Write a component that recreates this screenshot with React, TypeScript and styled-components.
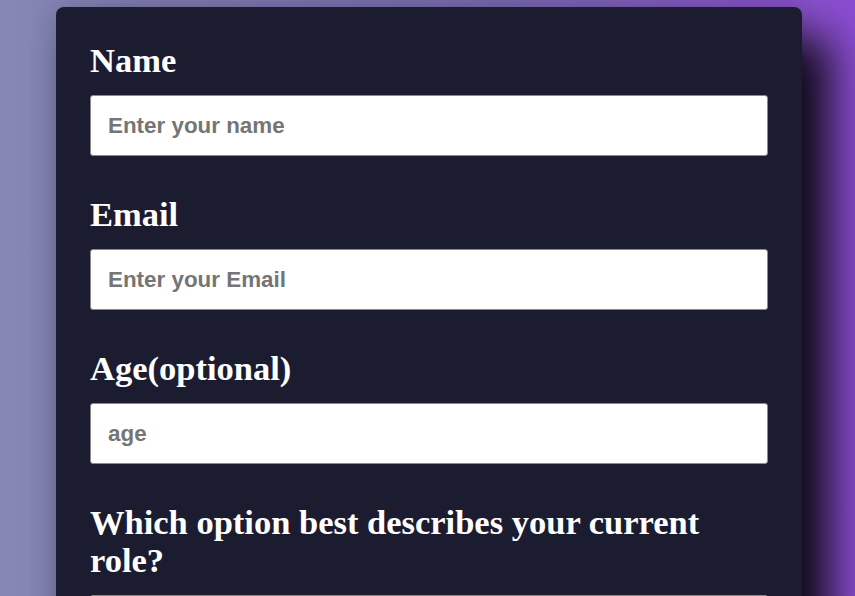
import React from "react";
import styled, { createGlobalStyle } from "styled-components";

const Global = createGlobalStyle`
  html, body {
    margin: 0;
    padding: 0;
    min-height: 100%;
  }
  body {
    background: linear-gradient(to right, #8587b4 0%, #7a6db0 55%, #8b4dd2 100%);
    font-family: "Liberation Serif", "Times New Roman", serif;
    overflow: hidden;
  }
`;

const Page = styled.div`
  display: flex;
  justify-content: center;
  padding: 7px 0 0 3px;
  min-height: 596px;
  box-sizing: border-box;
`;

const Card = styled.form`
  width: 746px;
  box-sizing: border-box;
  background: #1c1c31;
  border-radius: 8px;
  padding: 34px 34px 40px;
  box-shadow: 28px 30px 45px rgba(0, 0, 0, 0.9), -4px 0 24px rgba(0, 0, 0, 0.12);
  display: flex;
  flex-direction: column;
  gap: 39px;
`;

const Field = styled.div`
  display: flex;
  flex-direction: column;
`;

const Label = styled.label`
  display: block;
  color: #ffffff;
  font-family: "Liberation Serif", "Times New Roman", serif;
  font-weight: 700;
  font-size: 34.5px;
  line-height: 38px;
  margin-bottom: 16px;
`;

const Input = styled.input`
  box-sizing: border-box;
  width: 100%;
  height: 61px;
  padding: 0 17px;
  border: 1px solid #8a8a8a;
  border-radius: 3px;
  background: #ffffff;
  font-family: "Liberation Sans", Arial, sans-serif;
  font-weight: 700;
  font-size: 22.4px;
  color: #222;
  outline: none;
  &::placeholder {
    color: #757575;
  }
`;

const fields = [
  { id: "name", label: "Name", placeholder: "Enter your name", type: "text" },
  { id: "email", label: "Email", placeholder: "Enter your Email", type: "email" },
  { id: "age", label: "Age(optional)", placeholder: "age", type: "number" },
  { id: "role", label: "Which option best describes your current role?", placeholder: "", type: "text" },
];

export default function App() {
  return (
    <>
      <Global />
      <Page>
        <Card onSubmit={(e) => e.preventDefault()}>
          {fields.map((f) => (
            <Field key={f.id}>
              <Label htmlFor={f.id}>{f.label}</Label>
              <Input id={f.id} type={f.type} placeholder={f.placeholder} />
            </Field>
          ))}
        </Card>
      </Page>
    </>
  );
}
